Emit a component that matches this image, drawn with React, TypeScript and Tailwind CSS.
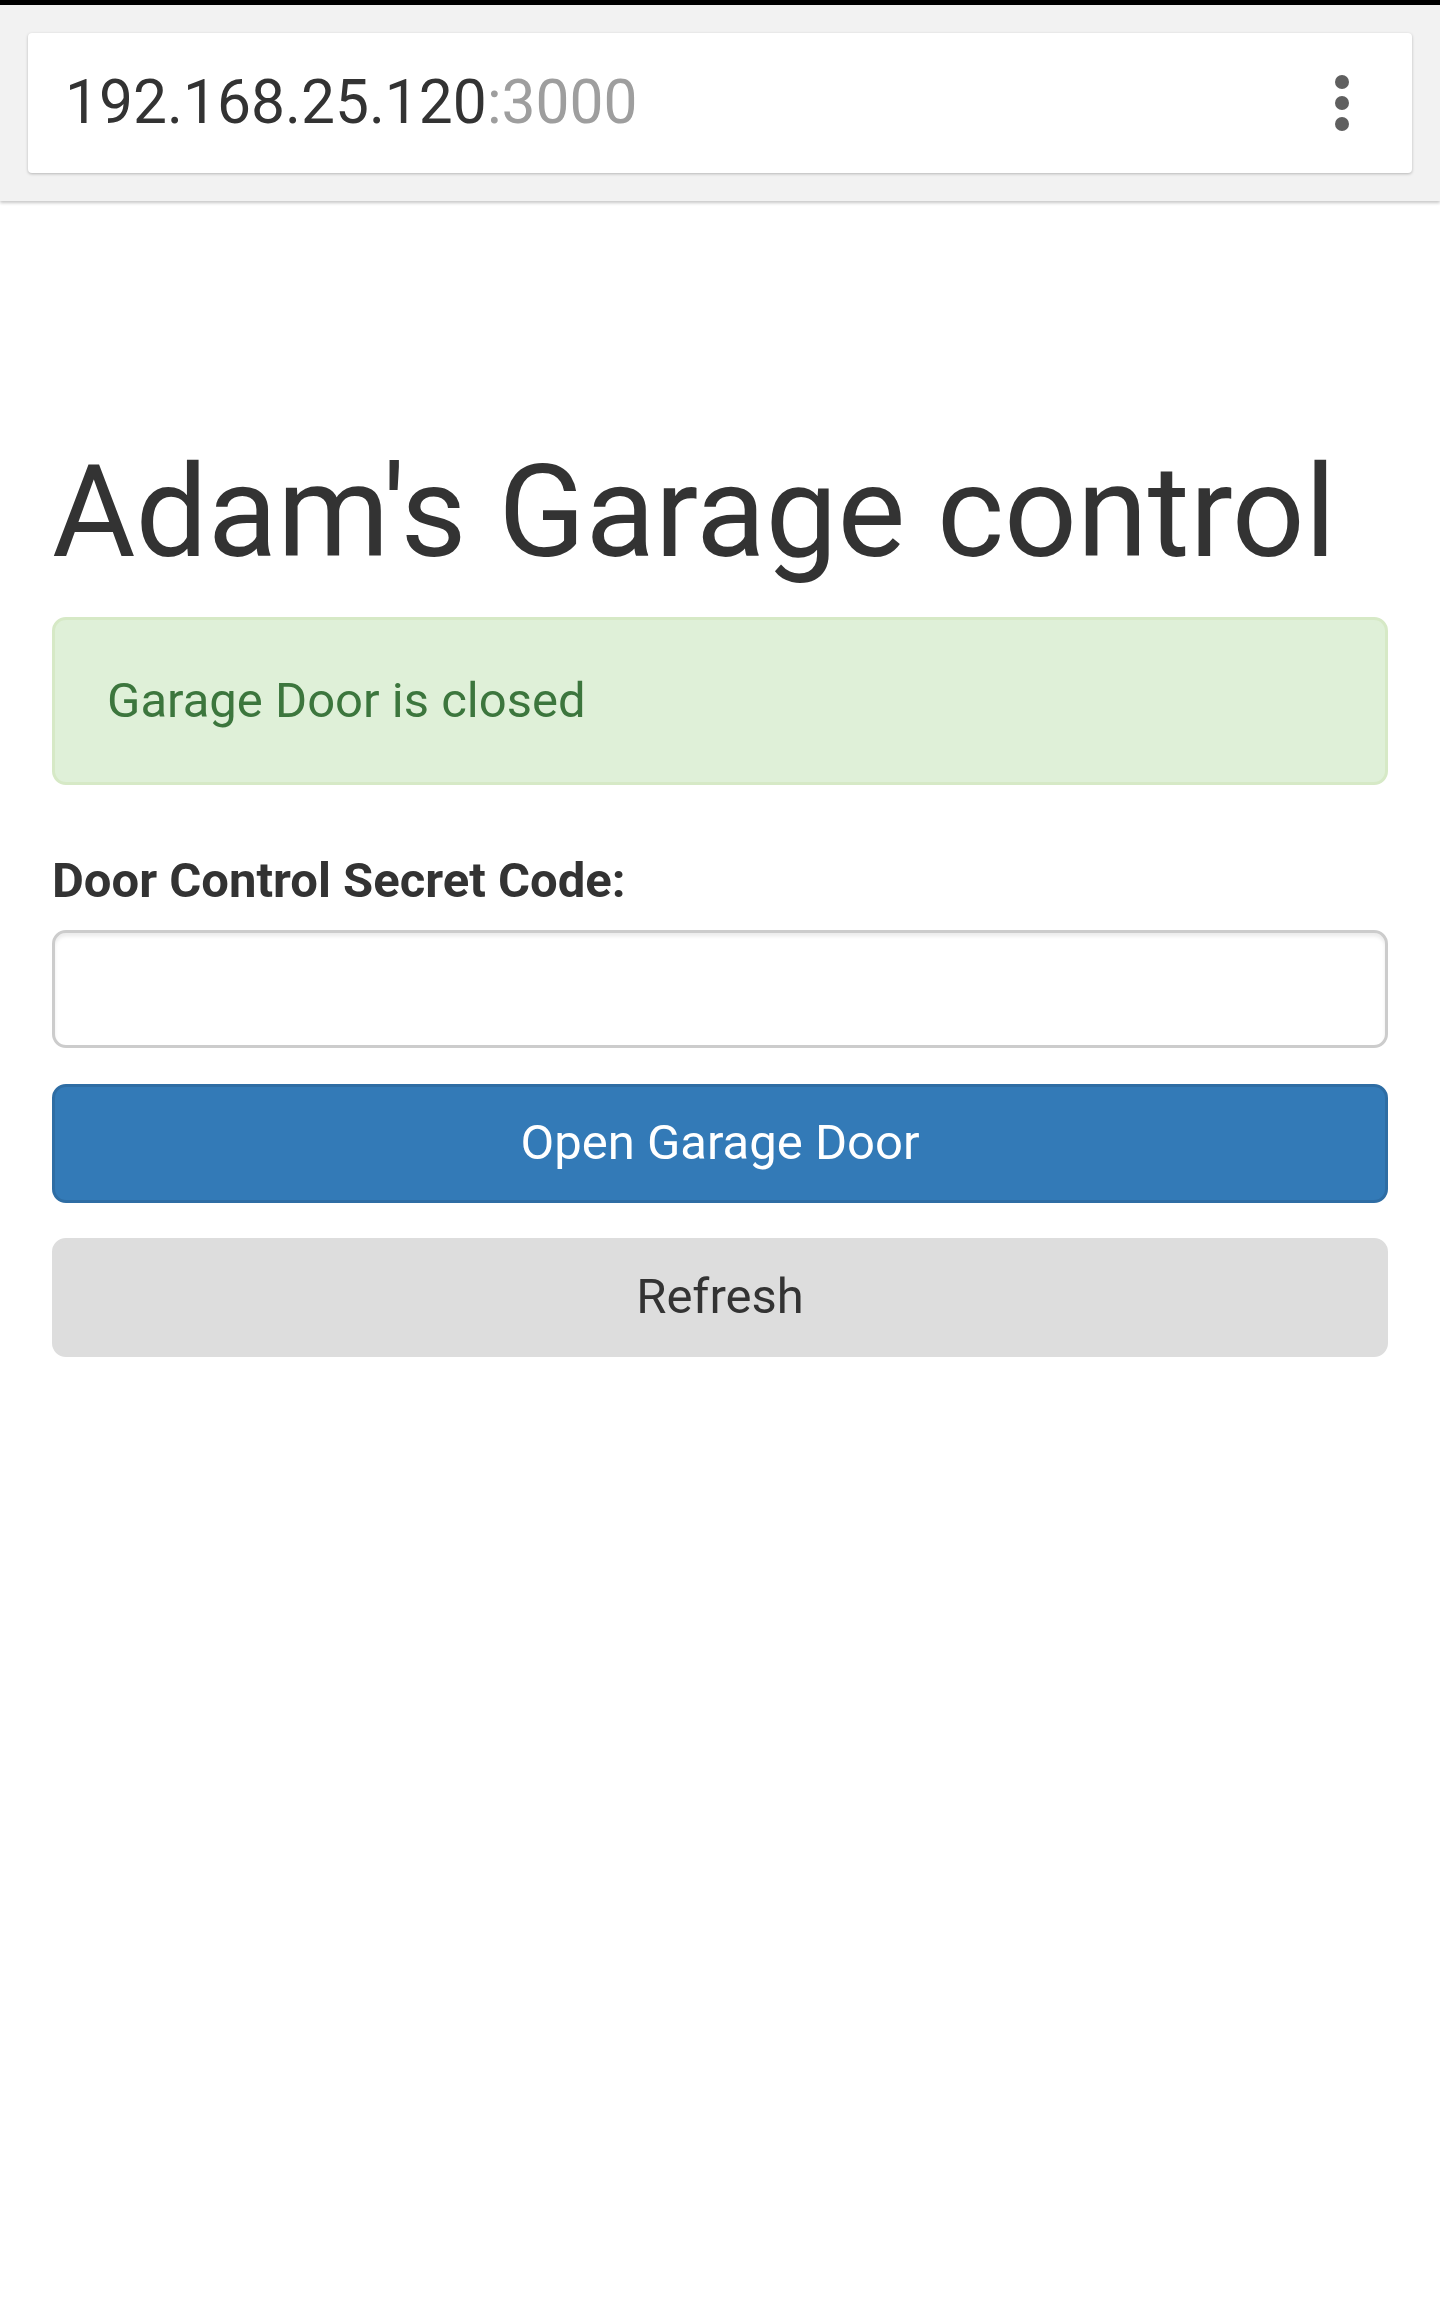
import { useState } from "react";

const font = { fontFamily: "Roboto, 'Noto Sans', Arial, sans-serif" };

const AddressBar = () => {
  return (
    <div className="bg-black pt-[5px]">
      <div className="bg-[#f2f2f2] px-[28px] pt-[28px] pb-[28px] shadow-[0_2px_3px_rgba(0,0,0,0.22)]">
        <div className="flex h-[140px] items-center justify-between rounded-[4px] bg-white pl-[37px] pr-[63px] shadow-[0_1px_3px_rgba(0,0,0,0.25)]">
          <p className="text-[60.5px] leading-none text-[#333333]">
            192.168.25.120<span className="text-[#9e9e9e]">:3000</span>
          </p>
          {/* overflow menu */}
          <div className="flex flex-col items-center gap-[7px]">
            <span className="block h-[14px] w-[14px] rounded-full bg-[#5f5f5f]" />
            <span className="block h-[14px] w-[14px] rounded-full bg-[#5f5f5f]" />
            <span className="block h-[14px] w-[14px] rounded-full bg-[#5f5f5f]" />
          </div>
        </div>
      </div>
    </div>
  );
};

const App = () => {
  const [code, setCode] = useState("");

  return (
    <div style={font} className="min-h-[2301px] bg-white text-[#333333]">
      <AddressBar />

      <div className="px-[52px] pt-[241px]">
        <h1 className="mb-[34px] text-[128px] leading-[1.1] font-normal">Adam's Garage control</h1>

        <div className="mb-[61px] rounded-[14px] border-[3.5px] border-[#d6e9c6] bg-[#dff0d8] px-[52px] py-[46px] text-[49px] leading-[70px] text-[#3c763d]">
          Garage Door is closed
        </div>

        <label className="mb-[14px] block text-[49px] leading-[70px] font-bold">Door Control Secret Code:</label>
        <input
          type="password"
          value={code}
          onChange={(e) => setCode(e.target.value)}
          className="block h-[118px] w-full rounded-[14px] border-[3.5px] border-[#cccccc] bg-white px-[42px] text-[49px] shadow-[inset_0_3.5px_3.5px_rgba(0,0,0,0.075)] outline-none"
        />

        <button className="mt-[36px] block h-[119px] w-full rounded-[14px] border-[3.5px] border-[#2e6da4] bg-[#337ab7] text-[49px] leading-[70px] text-white">
          Open Garage Door
        </button>
        <button className="mt-[35px] block h-[119px] w-full rounded-[14px] border-[3.5px] border-[#dddddd] bg-[#dddddd] text-[49px] leading-[70px] text-[#333333]">
          Refresh
        </button>
      </div>
    </div>
  );
};

export default App;
